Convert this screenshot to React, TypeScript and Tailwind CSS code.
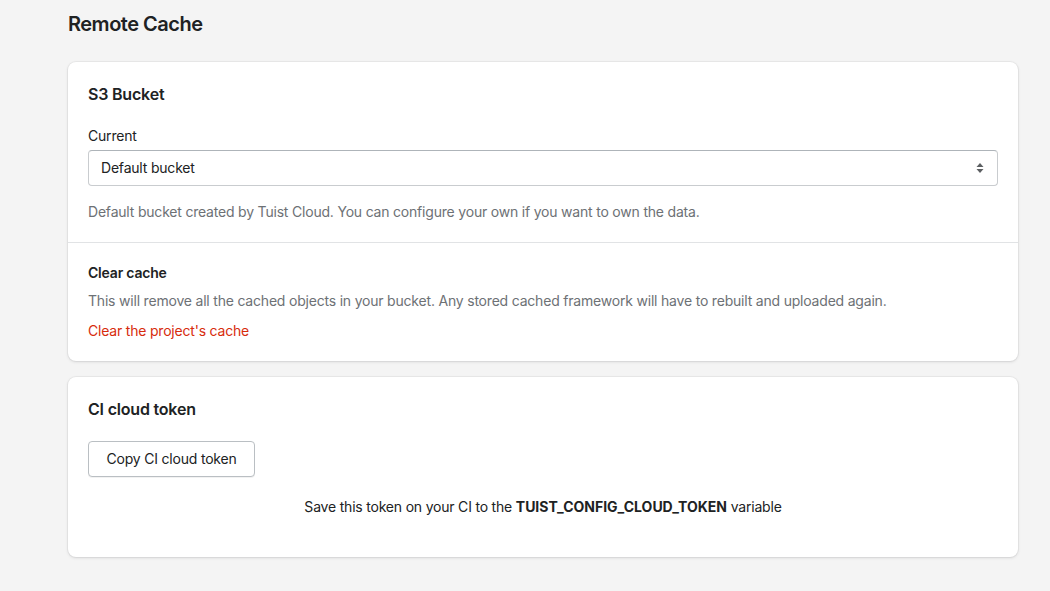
import React from "react";

function SelectArrows() {
  return (
    <svg width="10" height="14" viewBox="0 0 10 14" className="text-[#5c5f62]" fill="currentColor">
      <path d="M5 2 L8.5 6 H1.5 Z" />
      <path d="M5 12 L8.5 8 H1.5 Z" />
    </svg>
  );
}

export default function App() {
  return (
    <div
      className="min-h-[591px] w-full bg-[#f4f4f4] pl-[68px] pr-[32px] pt-[10px] pb-8 text-[#202223] tracking-[-0.2px]"
      style={{ fontFamily: "Inter, 'Noto Sans', sans-serif" }}
    >
      <h1 className="text-[20px] leading-[28px] font-semibold tracking-[-0.5px] text-[#202223]">Remote Cache</h1>

      <div className="mt-[24px] flex flex-col gap-4">
        {/* Card 1 */}
        <div className="rounded-lg bg-white shadow-[0_0_0_1px_rgba(63,63,68,0.05),0_1px_3px_0_rgba(63,63,68,0.15)]">
          <div className="p-5">
            <h2 className="text-[16px] leading-[24px] font-semibold">S3 Bucket</h2>
            <div className="mt-5">
              <label className="block text-[14px] leading-[20px] mb-1">Current</label>
              <div className="flex h-9 items-center justify-between rounded-[4px] border border-[#c9cccf] border-t-[#aeb4b9] px-3 bg-white">
                <span className="text-[14px] leading-[20px]">Default bucket</span>
                <SelectArrows />
              </div>
              <p className="mt-4 text-[14px] leading-[20px] text-[#6d7175]">
                Default bucket created by Tuist Cloud. You can configure your own if you want to own the data.
              </p>
            </div>
          </div>
          <div className="border-t border-[#e1e3e5] px-5 pt-5 pb-5">
            <h3 className="text-[14px] leading-[20px] font-semibold">Clear cache</h3>
            <p className="mt-2 text-[14px] leading-[20px] text-[#6d7175]">
              This will remove all the cached objects in your bucket. Any stored cached framework will have to rebuilt and uploaded again.
            </p>
            <button className="mt-[10px] block text-[14px] leading-[20px] text-[#d72c0d]">
              Clear the project's cache
            </button>
          </div>
        </div>

        {/* Card 2 */}
        <div className="rounded-lg bg-white shadow-[0_0_0_1px_rgba(63,63,68,0.05),0_1px_3px_0_rgba(63,63,68,0.15)]">
          <div className="px-5 pt-5 pb-10">
            <h2 className="text-[16px] leading-[24px] font-semibold">CI cloud token</h2>
            <button className="mt-5 flex h-9 w-[167px] items-center justify-center rounded-[4px] border border-[#babfc3] bg-white text-[14px] leading-[20px] font-normal text-[#202223] shadow-[0_1px_0_rgba(0,0,0,0.05)]">
              Copy CI cloud token
            </button>
            <p className="mt-5 text-center text-[14px] leading-[20px]">
              Save this token on your CI to the <span className="font-bold tracking-normal">TUIST_CONFIG_CLOUD_TOKEN</span> variable
            </p>
          </div>
        </div>
      </div>
    </div>
  );
}
